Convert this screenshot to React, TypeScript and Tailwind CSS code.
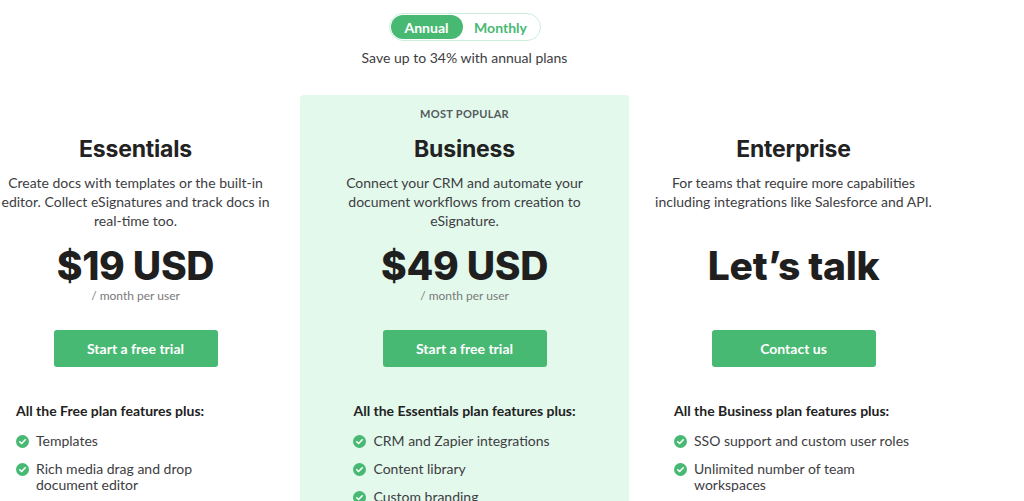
import React from 'react'

type Plan = {
  label: string
  name: string
  desc: string
  price: string
  per?: string
  cta: string
  featuresTitle: string
  features: string[]
  highlight?: boolean
}

const plans: Plan[] = [
  {
    label: '',
    name: 'Essentials',
    desc: 'Create docs with templates or the built-in editor. Collect eSignatures and track docs in real-time too.',
    price: '$19 USD',
    per: '/ month per user',
    cta: 'Start a free trial',
    featuresTitle: 'All the Free plan features plus:',
    features: ['Templates', 'Rich media drag and drop document editor'],
  },
  {
    label: 'MOST POPULAR',
    name: 'Business',
    desc: 'Connect your CRM and automate your document workflows from creation to eSignature.',
    price: '$49 USD',
    per: '/ month per user',
    cta: 'Start a free trial',
    featuresTitle: 'All the Essentials plan features plus:',
    features: ['CRM and Zapier integrations', 'Content library', 'Custom branding'],
    highlight: true,
  },
  {
    label: '',
    name: 'Enterprise',
    desc: 'For teams that require more capabilities including integrations like Salesforce and API.',
    price: 'Let\u2019s talk',
    cta: 'Contact us',
    featuresTitle: 'All the Business plan features plus:',
    features: ['SSO support and custom user roles', 'Unlimited number of team workspaces'],
  },
]

function CheckIcon() {
  return (
    <svg width="13" height="13" viewBox="0 0 16 16" className="mt-[2px] shrink-0">
      <circle cx="8" cy="8" r="8" fill="#48b973" />
      <path d="M4.6 8.3l2.3 2.2 4.5-4.6" fill="none" stroke="#fff" strokeWidth="2" strokeLinecap="round" strokeLinejoin="round" />
    </svg>
  )
}

function PlanColumn({ plan }: { plan: Plan }) {
  return (
    <div
      className={`w-[329px] shrink-0 pt-[12px] pb-10 text-center min-h-[420px] ${
        plan.highlight ? 'bg-[#e3f9ec] rounded-t-[4px]' : ''
      }`}
    >
      <div className="h-[14px] text-[11px] leading-[14px] font-bold tracking-[0.3px] text-[#555b5e]">
        {plan.label}
      </div>
      <h3 className="mt-[13px] text-[23px] leading-[30px] font-bold text-[#222] font-['Inter',sans-serif] tracking-[-0.2px]">
        {plan.name}
      </h3>
      <p className="mt-[9px] mx-auto w-[282px] h-[57px] text-[14px] leading-[19px] text-[#3d3d42]">
        {plan.desc}
      </p>
      <div className="mt-[16px] h-[40px] text-[39px] leading-[40px] font-extrabold text-[#1f1f1f] font-['Inter',sans-serif] tracking-[-0.3px]">
        {plan.price}
      </div>
      <div className="mt-[2px] h-[16px] text-[12px] leading-[16px] text-[#7a7a7a]">{plan.per}</div>
      <button className="mt-[26px] w-[164px] h-[37px] rounded-[3px] bg-[#48b973] text-white text-[14px] font-bold">
        {plan.cta}
      </button>
      <div className="mt-[34px] inline-block max-w-[239px] text-left align-top">
        <div className="text-[14px] leading-[20px] font-bold text-[#222]">{plan.featuresTitle}</div>
        <ul className="mt-[12px] flex flex-col gap-[12px]">
          {plan.features.map((f) => (
            <li key={f} className="flex items-start gap-[7px] text-[14px] leading-[16px] text-[#3d3d42]">
              <CheckIcon />
              <span>{f}</span>
            </li>
          ))}
        </ul>
      </div>
    </div>
  )
}

export default function App() {
  return (
    <div className="w-[1024px] h-[501px] overflow-hidden bg-white font-['Lato',sans-serif]">
      <div className="w-[987px] ml-[-29px]">
        <div className="flex flex-col items-center pt-[13px]">
          <div className="flex items-center h-[28px] w-[152px] rounded-full border border-[#cdeedb] p-[1px]">
            <span className="flex items-center justify-center w-[72px] h-[24px] rounded-full bg-[#48b973] text-white text-[14px] font-bold">
              Annual
            </span>
            <span className="flex-1 text-center text-[14px] font-bold text-[#48b973]">Monthly</span>
          </div>
          <p className="mt-[9px] text-[14px] leading-[16px] text-[#3d3d42]">Save up to 34% with annual plans</p>
        </div>
        <div className="mt-[29px] flex">
          {plans.map((p) => (
            <PlanColumn key={p.name} plan={p} />
          ))}
        </div>
      </div>
    </div>
  )
}
